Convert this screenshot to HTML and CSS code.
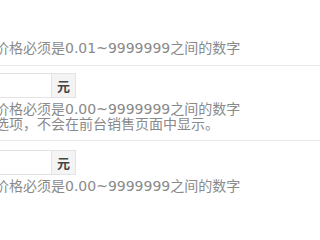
FILE: index.html
```html
<!DOCTYPE html>
<html lang="zh-CN">
<head>
<meta charset="utf-8">
<title>价格设置</title>
<link rel="stylesheet" href="styles.css">
</head>
<body>
<div class="form">
  <div class="group group-first">
    <p class="help">价格必须是0.01~9999999之间的数字</p>
  </div>
  <div class="group">
    <div class="input-group">
      <input class="control" type="text">
      <span class="addon">元</span>
    </div>
    <p class="help">价格必须是0.00~9999999之间的数字<br>选项，不会在前台销售页面中显示。</p>
  </div>
  <div class="group group-last">
    <div class="input-group">
      <input class="control" type="text">
      <span class="addon">元</span>
    </div>
    <p class="help">价格必须是0.00~9999999之间的数字</p>
  </div>
</div>
</body>
</html>
```

FILE: styles.css
```css
html, body {
  margin: 0;
  padding: 0;
  background: #fff;
}
html {
  overflow: hidden;
}
body {
  height: 240px;
  overflow: hidden;
  font-family: "DejaVu Sans", "Noto Sans CJK SC", sans-serif;
  font-size: 14px;
  line-height: 15px;
  color: #888;
}
.form {
  margin: 33px 0 0 -5px;
}
.group {
  padding: 7px 0 8px;
  border-bottom: 1px solid #e9e9e9;
}
.group-first {
  padding: 8px 0 9px;
}
.group-last {
  padding-top: 9px;
  border-bottom: none;
}
.help {
  margin: 0;
  white-space: nowrap;
  color: #8a8a8a;
}
.input-group {
  display: flex;
  height: 25px;
  margin-bottom: 4px;
}
.control {
  box-sizing: border-box;
  width: 56px;
  height: 25px;
  margin: 0;
  padding: 0 6px;
  border: 1px solid #e3e3e3;
  border-right: none;
  background: #fff;
  outline: none;
}
.addon {
  box-sizing: border-box;
  width: 25px;
  height: 25px;
  display: flex;
  align-items: center;
  justify-content: center;
  border: 1px solid #e3e3e3;
  background: #f4f4f4;
  color: #444;
  font-size: 13px;
  font-weight: bold;
  font-family: "Noto Sans CJK SC", sans-serif;
}
```
